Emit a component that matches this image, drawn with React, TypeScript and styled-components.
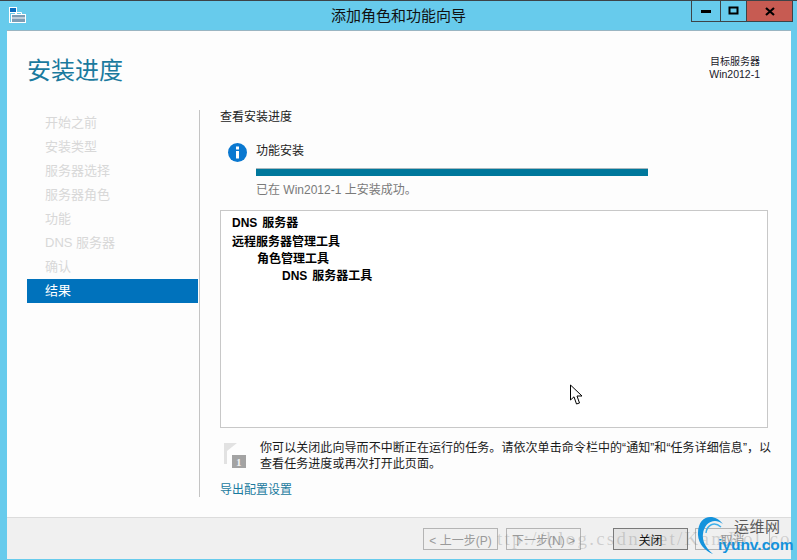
import React from 'react'
import styled, { createGlobalStyle } from 'styled-components'

const CJK = `"Liberation Sans", "Noto Sans CJK SC", sans-serif`

const GlobalStyle = createGlobalStyle`
  html, body {
    margin: 0;
    padding: 0;
    width: 797px;
    height: 560px;
    overflow: hidden;
    background: #ffffff;
  }
  * {
    box-sizing: border-box;
  }
`
const Window = styled.div`
  position: relative;
  width: 797px;
  height: 560px;
  display: flex;
  flex-direction: column;
  background: #67cbec;
  border-top: 1px solid #3d4347;
  font-family: ${CJK};
  font-size: 12px;
  color: #1a1a1a;
  overflow: hidden;
`
const TitleBar = styled.div`
  position: relative;
  height: 29px;
  flex: none;
  display: flex;
  align-items: center;
  justify-content: center;
  padding-bottom: 3px;
  font-size: 15px;
  color: #111;
`
const TitleIcon = styled.svg`
  position: absolute;
  left: 9px;
  top: 6px;
`
const Controls = styled.div`
  position: absolute;
  right: 4px;
  top: 0;
  height: 21px;
  display: flex;
  border: 1px solid #3d4347;
  border-top: none;
`
const Control = styled.div<{ $w: number; $bg?: string }>`
  width: ${(p) => p.$w}px;
  display: flex;
  align-items: center;
  justify-content: center;
  background: ${(p) => p.$bg || 'transparent'};
  & + & {
    border-left: 1px solid #3d4347;
  }
`
const Body = styled.div`
  flex: 1;
  margin: 0 6px 0 7px;
  display: flex;
  flex-direction: column;
  background: #fdfdfd;
  border-top: 1px solid #9ab5c2;
  min-height: 0;
`
const Header = styled.div`
  height: 79px;
  flex: none;
  padding: 22px 31px 0 20px;
  display: flex;
  justify-content: space-between;
`
const PageTitle = styled.h1`
  margin: 0;
  font-size: 24px;
  font-weight: 400;
  line-height: 36px;
  color: #1a7a9e;
`
const ServerInfo = styled.div`
  margin-top: 2px;
  text-align: right;
  font-size: 10.5px;
  line-height: 13px;
  color: #1a1a2a;
`
const ServerLabel = styled.div`
  font-size: 10px;
`
const Main = styled.div`
  flex: 1;
  display: flex;
  min-height: 0;
  padding-left: 20px;
`
const Nav = styled.div`
  width: 171px;
  height: 387px;
  flex: none;
  padding-top: 1px;
`
const NavItem = styled.div<{ $active?: boolean }>`
  height: 24px;
  line-height: 24px;
  padding-left: 18px;
  font-size: 13px;
  color: ${(p) => (p.$active ? '#ffffff' : '#d8d8d8')};
  background: ${(p) => (p.$active ? '#0072bc' : 'transparent')};
`
const Content = styled.div`
  width: 574px;
  height: 387px;
  flex: none;
  margin-left: 1px;
  padding-left: 20px;
  border-left: 1px solid #c4c4c4;
`
const Lead = styled.div`
  font-size: 12px;
  line-height: 14px;
  color: #222;
`
const Status = styled.div`
  display: flex;
  margin: 15px 0 0 8px;
  gap: 9px;
`
const InfoIcon = styled.svg`
  flex: none;
  margin-top: 4px;
`
const StatusBody = styled.div`
  width: 392px;
`
const StatusTitle = styled.div`
  font-size: 12px;
  line-height: 14px;
  margin-top: 5px;
  color: #222;
`
const Progress = styled.div`
  height: 8px;
  margin-top: 10px;
  background: #00789c;
  border-top: 1px solid #a8b8be;
`
const StatusNote = styled.div`
  margin-top: 7px;
  font-size: 12px;
  line-height: 14px;
  color: #7a7a7a;
`
const ResultBox = styled.div`
  width: 548px;
  height: 218px;
  margin-top: 13px;
  padding: 3px 11px;
  background: #ffffff;
  border: 1px solid #c8c8c8;
`
const ResultRow = styled.div<{ $level: number; $h: number }>`
  height: ${(p) => p.$h}px;
  line-height: ${(p) => p.$h}px;
  padding-left: ${(p) => p.$level * 25}px;
  font-size: 12px;
  font-weight: 700;
  word-spacing: 1.5px;
  color: #000;
`
const Notice = styled.div`
  display: flex;
  margin: 12px 0 0 4px;
  gap: 14px;
`
const FlagIcon = styled.svg`
  flex: none;
  margin-top: 3px;
`
const NoticeText = styled.div`
  width: 512px;
  flex: none;
  font-size: 12px;
  line-height: 16px;
  letter-spacing: 0.07px;
  color: #1a1a1a;
`
const ExportLink = styled.a`
  display: block;
  margin-top: 11px;
  font-size: 12px;
  line-height: 14px;
  color: #1a7a9e;
`
const Footer = styled.div`
  height: 42px;
  flex: none;
  display: flex;
  align-items: flex-start;
  padding: 10px 0 0 416px;
  background: #f0f0f0;
  border-top: 1px solid #dcdcdc;
`
const Button = styled.div<{ $disabled?: boolean; $primary?: boolean; $mr?: number }>`
  width: 75px;
  height: 22px;
  margin-right: ${(p) => p.$mr ?? 0}px;
  display: flex;
  align-items: center;
  justify-content: center;
  font-size: 12px;
  color: ${(p) => (p.$disabled ? '#9a9a9a' : '#111')};
  background: ${(p) => (p.$primary ? '#e4e4e4' : '#f0f0f0')};
  border: 1px solid ${(p) => (p.$primary ? '#7a7a7a' : '#b4b4b4')};
`
const BottomEdge = styled.div`
  height: 1px;
  flex: none;
`
const Cursor = styled.svg`
  position: absolute;
  left: 570px;
  top: 383px;
`
const Watermark = styled.div`
  position: absolute;
  left: 497px;
  top: 527px;
  white-space: nowrap;
  font-family: "Liberation Serif", serif;
  font-size: 19px;
  letter-spacing: 2.25px;
  color: rgba(120, 120, 120, 0.28);
`
const Logo = styled.div`
  position: absolute;
  left: 692px;
  top: 512px;
  width: 105px;
  height: 48px;
`
const LogoArc = styled.svg`
  position: absolute;
  left: 0;
  top: 0;
`
const LogoCn = styled.div`
  position: absolute;
  left: 42px;
  top: 2px;
  font-size: 15px;
  letter-spacing: 0.5px;
  color: #5a5a5a;
`
const LogoEn = styled.div`
  position: absolute;
  left: 26px;
  top: 23px;
  font-size: 15.5px;
  font-weight: 700;
  color: #1593dc;
`

const steps = ['开始之前', '安装类型', '服务器选择', '服务器角色', '功能', 'DNS 服务器', '确认']

const results = [
  { label: 'DNS 服务器', level: 0, h: 19 },
  { label: '远程服务器管理工具', level: 0, h: 18 },
  { label: '角色管理工具', level: 1, h: 17 },
  { label: 'DNS 服务器工具', level: 2, h: 17 },
]

const App = () => {
  return (
    <Window>
      <GlobalStyle />
      <TitleBar>
        <TitleIcon width="18" height="17" viewBox="0 0 18 17" fill="none">
          <rect x="0.5" y="0.5" width="7" height="15" stroke="#fff" />
          <rect x="1" y="1" width="6" height="4" fill="#0a6fc0" />
          <rect x="1" y="5" width="6" height="1" fill="#fff" />
          <path d="M6.5 8 V5.5 H12.5 V8" stroke="#fff" />
          <rect x="2.5" y="7.5" width="14" height="8" fill="#7c9db5" stroke="#fff" />
          <rect x="3" y="10.5" width="13" height="1" fill="#fff" />
        </TitleIcon>
        添加角色和功能向导
        <Controls>
          <Control $w={28}>
            <svg width="12" height="4" viewBox="0 0 12 4">
              <rect width="10" height="3" y="1" x="1" fill="#000" />
            </svg>
          </Control>
          <Control $w={26}>
            <svg width="12" height="10" viewBox="0 0 12 10" fill="none">
              <rect x="1.5" y="1.5" width="8" height="6" stroke="#000" strokeWidth="2" />
            </svg>
          </Control>
          <Control $w={46} $bg="#c75b52">
            <svg width="10" height="9" viewBox="0 0 10 9">
              <path d="M1 1 L9 8 M9 1 L1 8" stroke="#000" strokeWidth="2.2" />
            </svg>
          </Control>
        </Controls>
      </TitleBar>
      <Body>
        <Header>
          <PageTitle>安装进度</PageTitle>
          <ServerInfo>
            <ServerLabel>目标服务器</ServerLabel>
            Win2012-1
          </ServerInfo>
        </Header>
        <Main>
          <Nav>
            {steps.map((s) => (
              <NavItem key={s}>{s}</NavItem>
            ))}
            <NavItem $active>结果</NavItem>
          </Nav>
          <Content>
            <Lead>查看安装进度</Lead>
            <Status>
              <InfoIcon width="19" height="19" viewBox="0 0 19 19">
                <circle cx="9.5" cy="9.5" r="9.5" fill="#0a78d0" />
                <rect x="8" y="8" width="3" height="7.5" fill="#fff" />
                <rect x="8" y="3.5" width="3" height="3" fill="#fff" />
              </InfoIcon>
              <StatusBody>
                <StatusTitle>功能安装</StatusTitle>
                <Progress />
                <StatusNote>已在 Win2012-1 上安装成功。</StatusNote>
              </StatusBody>
            </Status>
            <ResultBox>
              {results.map((r) => (
                <ResultRow key={r.label} $level={r.level} $h={r.h}>
                  {r.label}
                </ResultRow>
              ))}
            </ResultBox>
            <Notice>
              <FlagIcon width="22" height="26" viewBox="0 0 22 26">
                <path d="M0 0 L13 0 L3 8 L3 21 L0 21 Z" fill="#e2e2e2" />
                <rect x="8" y="12" width="14" height="13" fill="#a3a3a3" />
                <text x="12" y="23" fontSize="11" fontWeight="700" fontFamily="Liberation Serif" fill="#f2f2f2">1</text>
              </FlagIcon>
              <NoticeText>
                你可以关闭此向导而不中断正在运行的任务。请依次单击命令栏中的“通知”和“任务详细信息”，以查看任务进度或再次打开此页面。
              </NoticeText>
            </Notice>
            <ExportLink>导出配置设置</ExportLink>
          </Content>
        </Main>
        <Footer>
          <Button $disabled $mr={8}>&lt; 上一步(P)</Button>
          <Button $disabled $mr={32}>下一步(N) &gt;</Button>
          <Button $primary $mr={7}>关闭</Button>
          <Button $disabled>取消</Button>
        </Footer>
      </Body>
      <BottomEdge />
      <Cursor width="14" height="22" viewBox="0 0 14 22">
        <path d="M0.5 1 L0.5 16 L4 12.8 L6.5 20 L9.5 19 L7 12 L12 12 Z" fill="#fff" stroke="#000" />
      </Cursor>
      <Watermark>ttp://blog.csdn.net/KamRol.co</Watermark>
      <Logo>
        <LogoArc width="50" height="48" viewBox="0 0 50 48" fill="none">
          <path d="M31 11 C22 -1 5 2 6 22 C6.5 31 13 38 21 41 C14 35 10 28 11 21 C12 10 22 4 31 11 Z" fill="#1593dc" />
          <path d="M29 14 C22 8 15 12 14 20" stroke="#3fb0ea" strokeWidth="1.5" />
        </LogoArc>
        <LogoCn>运维网</LogoCn>
        <LogoEn>iyunv.com</LogoEn>
      </Logo>
    </Window>
  )
}

export default App
